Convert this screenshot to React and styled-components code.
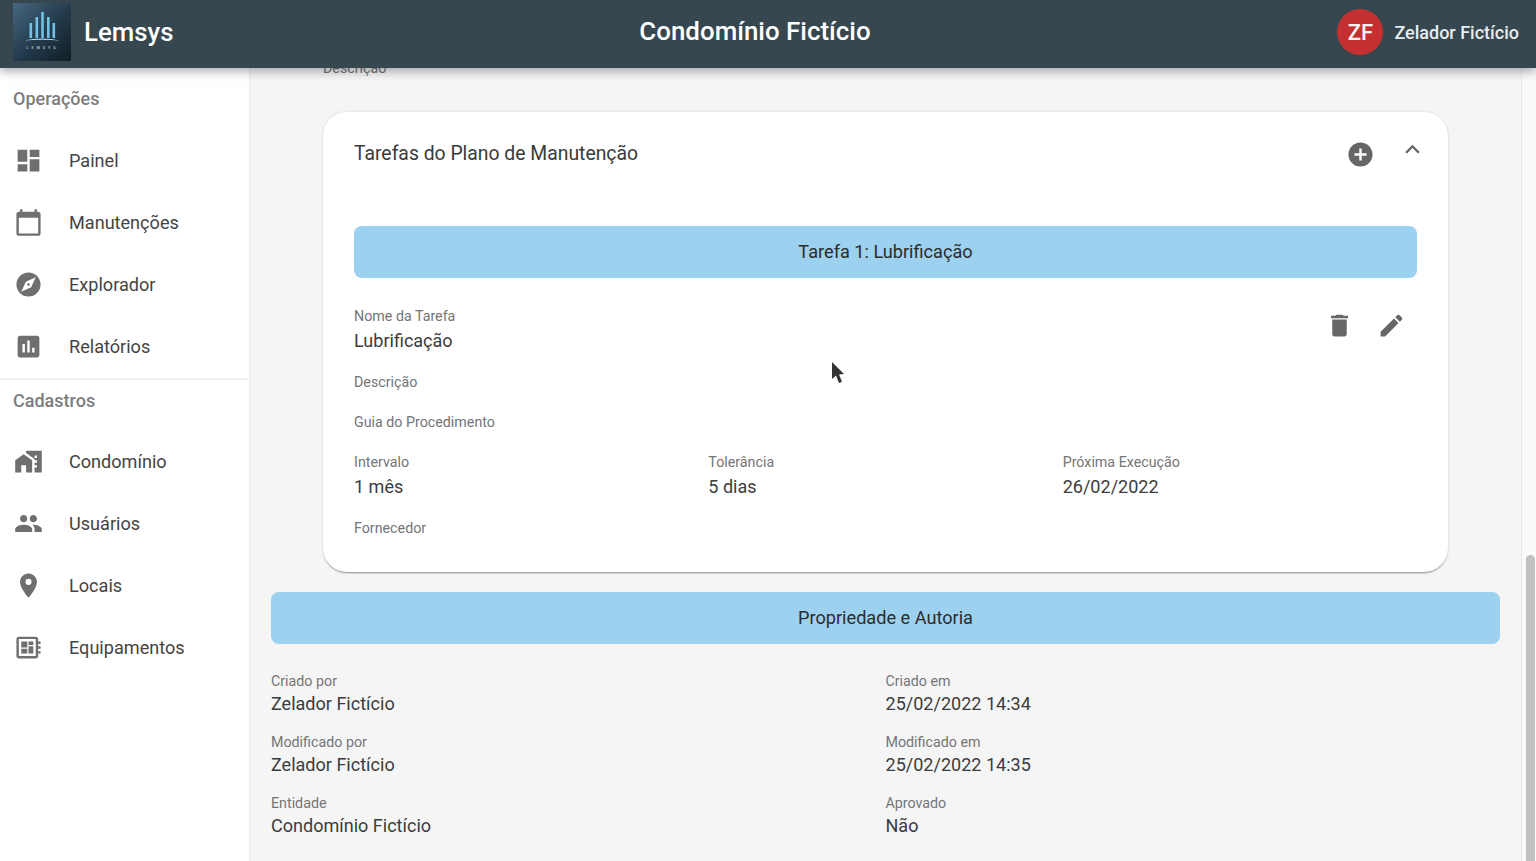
import React from 'react';
import styled, { createGlobalStyle } from 'styled-components';
import {
    MdDashboard, MdCalendarToday, MdExplore, MdAssessment, MdHomeWork, MdPeople,
    MdRoom, MdDeveloperBoard, MdAddCircle, MdExpandLess, MdDelete, MdEdit
} from 'react-icons/md';

const GlobalStyle = createGlobalStyle`
    html, body {
        margin: 0;
        height: 100%;
        overflow: hidden;
        font-family: Roboto, "Liberation Sans", sans-serif;
        color: #333;
    }
    * { box-sizing: border-box; }
`;

const Page = styled.div`
    position: relative;
    height: 861px;
    display: flex;
    flex-direction: column;
    overflow: hidden;
    background: #f5f5f5;
`;

const Header = styled.header`
    position: relative;
    z-index: 2;
    height: 68px;
    flex: none;
    display: grid;
    grid-template-columns: 1fr auto 1fr;
    align-items: center;
    padding: 0 17px 4px 13px;
    background: #37474f;
    box-shadow: 0 3px 10px rgba(0, 0, 0, 0.35);
    color: #fff;
`;

const Brand = styled.div`
    display: flex;
    align-items: center;
    gap: 13px;
    font-size: 25.8px;
    font-weight: 500;
    line-height: 58px;
`;

const Logo = styled.svg`
    width: 58px;
    height: 58px;
    display: block;
`;

const HeaderTitle = styled.div`
    font-size: 25.9px;
    font-weight: 500;
    transform: translate(-11px, -1px);
`;

const UserBox = styled.div`
    display: flex;
    align-items: center;
    justify-content: flex-end;
    gap: 11px;
    font-size: 18px;
    font-weight: 500;
    color: #e6edf0;
`;

const Avatar = styled.div`
    width: 46px;
    height: 46px;
    border-radius: 50%;
    background: #c43030;
    color: #f5f5f5;
    display: flex;
    align-items: center;
    justify-content: center;
    font-size: 22px;
    font-weight: 500;
`;

const Body = styled.div`
    flex: 1;
    min-height: 0;
    display: flex;
`;

const Sidebar = styled.nav`
    width: 251px;
    flex: none;
    padding-top: 10px;
    background: #fff;
    border-right: 2px solid #eeeeee;
`;

const SideHeading = styled.h3`
    margin: 0 0 11px;
    height: 40px;
    padding-left: 13px;
    display: flex;
    align-items: center;
    font-size: 18px;
    font-weight: 500;
    color: #7d7d7d;
`;

const SideSection = styled.section`
    & + & {
        margin-top: 1px;
        border-top: 2px solid #eeeeee;
    }

    & + & ${SideHeading} {
        margin-bottom: 10px;
    }
`;

const SideItem = styled.a`
    height: 62px;
    display: flex;
    align-items: center;
    padding-left: 14px;
    font-size: 18.1px;
    color: #444;

    svg {
        width: 29px;
        height: 29px;
        flex: none;
        margin-right: 26px;
        color: #6f6f6f;
    }
`;

const Main = styled.main`
    flex: 1;
    min-width: 0;
    padding: 0 21px 0 20px;
    overflow: hidden;
`;

const ClippedLabel = styled.div`
    margin: -10px 0 0 52px;
    height: 20px;
    line-height: 20px;
    font-size: 14.25px;
    color: #757575;
`;

const Card = styled.div`
    margin: 34px 52px 20px;
    height: 460px;
    padding: 0 31px;
    background: #fff;
    border-radius: 24px;
    box-shadow: 0 2px 2px -1px rgba(0, 0, 0, 0.4), 0 0 3px rgba(0, 0, 0, 0.12);
`;

const CardHead = styled.div`
    height: 114px;
    margin-right: -10px;
    display: flex;
    align-items: flex-start;
    padding-top: 28px;
`;

const CardTitle = styled.h2`
    flex: 1;
    margin: 0;
    font-size: 19.35px;
    line-height: 27px;
    font-weight: 400;
    color: #3a3a3a;
`;

const IconSlot = styled.span`
    width: 29px;
    height: 29px;
    display: flex;
    color: #666;
    margin-left: ${(props) => props.$gap || 0}px;
    transform: translateY(${(props) => props.$shift || 0}px);

    svg {
        width: 100%;
        height: 100%;
    }
`;

const SectionBar = styled.div`
    height: 52px;
    padding-bottom: 2px;
    display: flex;
    align-items: center;
    justify-content: center;
    background: #9dd1f0;
    border-radius: 8px;
    font-size: 18.15px;
    color: #2c2c2c;
`;

const Fields = styled.div`
    position: relative;
    padding-top: 28px;
`;

const Actions = styled.div`
    position: absolute;
    top: 33px;
    right: 11px;
    display: flex;
    gap: 23px;
`;

const Field = styled.div`
    height: ${(props) => (props.$empty ? 40 : 66)}px;
    font-size: 14.25px;
    color: #757575;
`;

const FieldLabel = styled.div`
    line-height: 20px;
`;

const FieldValue = styled.div`
    margin-top: 2px;
    line-height: 26px;
    font-size: 18.05px;
    color: #3c3c3c;
`;

const ThreeCols = styled.div`
    display: grid;
    grid-template-columns: repeat(3, 1fr);
`;

const TwoCols = styled.div`
    display: grid;
    grid-template-columns: repeat(2, 1fr);
    padding-top: 27px;
`;

const AuthorField = styled.div`
    height: 61px;
    font-size: 14.25px;
    color: #757575;

    ${FieldValue} {
        margin-top: 0;
    }
`;

const Scrollbar = styled.div`
    width: 15px;
    flex: none;
    display: flex;
    flex-direction: column;
    justify-content: flex-end;
    background: #fafafa;
    border-left: 1px solid #e8e8e8;
`;

const ScrollThumb = styled.div`
    height: 306px;
    margin: 0 1px 0 4px;
    border-radius: 5px 5px 0 0;
    background: #c1c1c1;
`;

const Cursor = styled.svg`
    position: absolute;
    left: 830px;
    top: 361px;
    width: 16px;
    height: 25px;
    z-index: 3;
`;

const menu = [
    {
        title: 'Operações',
        items: [
            { label: 'Painel', icon: MdDashboard },
            { label: 'Manutenções', icon: MdCalendarToday },
            { label: 'Explorador', icon: MdExplore },
            { label: 'Relatórios', icon: MdAssessment },
        ],
    },
    {
        title: 'Cadastros',
        items: [
            { label: 'Condomínio', icon: MdHomeWork },
            { label: 'Usuários', icon: MdPeople },
            { label: 'Locais', icon: MdRoom },
            { label: 'Equipamentos', icon: MdDeveloperBoard },
        ],
    },
];

const authorship = [
    ['Criado por', 'Zelador Fictício'],
    ['Criado em', '25/02/2022 14:34'],
    ['Modificado por', 'Zelador Fictício'],
    ['Modificado em', '25/02/2022 14:35'],
    ['Entidade', 'Condomínio Fictício'],
    ['Aprovado', 'Não'],
];

const LemsysLogo = () => (
    <Logo viewBox="0 0 58 58">
        <defs>
            <linearGradient id="logoBg" x1="0" y1="0" x2="1" y2="1">
                <stop offset="0" stopColor="#46687f" />
                <stop offset="0.55" stopColor="#22394a" />
                <stop offset="1" stopColor="#111d26" />
            </linearGradient>
        </defs>
        <rect width="58" height="58" fill="url(#logoBg)" />
        <g fill="#72c2e4">
            <rect x="16.5" y="20" width="2.6" height="15" />
            <rect x="22.5" y="14" width="2.6" height="21" />
            <rect x="28.2" y="9" width="2.6" height="26" />
            <rect x="34" y="14" width="2.6" height="21" />
            <rect x="39.5" y="20" width="2.6" height="15" />
        </g>
        <path d="M11 37.5 Q29 33.5 47 37.5 Q29 36 11 37.5Z" fill="#a6dcf5" />
        <text x="29.5" y="45.5" textAnchor="middle" fontSize="4" letterSpacing="2.8" fill="#b3cad6" fontFamily="Roboto, sans-serif">LEMSYS</text>
    </Logo>
);

export default function App() {
    return (
        <>
            <GlobalStyle />
            <Page>
                <Header>
                    <Brand>
                        <LemsysLogo />
                        Lemsys
                    </Brand>
                    <HeaderTitle>Condomínio Fictício</HeaderTitle>
                    <UserBox>
                        <Avatar>ZF</Avatar>
                        Zelador Fictício
                    </UserBox>
                </Header>
                <Body>
                    <Sidebar>
                        {menu.map((section) => (
                            <SideSection key={section.title}>
                                <SideHeading>{section.title}</SideHeading>
                                {section.items.map(({ label, icon: Icon }) => (
                                    <SideItem key={label}>
                                        <Icon />
                                        {label}
                                    </SideItem>
                                ))}
                            </SideSection>
                        ))}
                    </Sidebar>
                    <Main>
                        <ClippedLabel>Descrição</ClippedLabel>
                        <Card>
                            <CardHead>
                                <CardTitle>Tarefas do Plano de Manutenção</CardTitle>
                                <IconSlot><MdAddCircle /></IconSlot>
                                <IconSlot $gap={23} $shift={-5}><MdExpandLess /></IconSlot>
                            </CardHead>
                            <SectionBar>Tarefa 1: Lubrificação</SectionBar>
                            <Fields>
                                <Actions>
                                    <IconSlot><MdDelete /></IconSlot>
                                    <IconSlot><MdEdit /></IconSlot>
                                </Actions>
                                <Field>
                                    <FieldLabel>Nome da Tarefa</FieldLabel>
                                    <FieldValue>Lubrificação</FieldValue>
                                </Field>
                                <Field $empty><FieldLabel>Descrição</FieldLabel></Field>
                                <Field $empty><FieldLabel>Guia do Procedimento</FieldLabel></Field>
                                <ThreeCols>
                                    <Field>
                                        <FieldLabel>Intervalo</FieldLabel>
                                        <FieldValue>1 mês</FieldValue>
                                    </Field>
                                    <Field>
                                        <FieldLabel>Tolerância</FieldLabel>
                                        <FieldValue>5 dias</FieldValue>
                                    </Field>
                                    <Field>
                                        <FieldLabel>Próxima Execução</FieldLabel>
                                        <FieldValue>26/02/2022</FieldValue>
                                    </Field>
                                </ThreeCols>
                                <Field $empty><FieldLabel>Fornecedor</FieldLabel></Field>
                            </Fields>
                        </Card>
                        <SectionBar>Propriedade e Autoria</SectionBar>
                        <TwoCols>
                            {authorship.map(([label, value]) => (
                                <AuthorField key={label}>
                                    <FieldLabel>{label}</FieldLabel>
                                    <FieldValue>{value}</FieldValue>
                                </AuthorField>
                            ))}
                        </TwoCols>
                    </Main>
                    <Scrollbar><ScrollThumb /></Scrollbar>
                </Body>
                <Cursor viewBox="0 0 16 25">
                    <path d="M2 1 L2 18 L6 14.5 L9 22 L12 20.8 L9 13.5 L14 13 Z" fill="#333" />
                </Cursor>
            </Page>
        </>
    );
}
